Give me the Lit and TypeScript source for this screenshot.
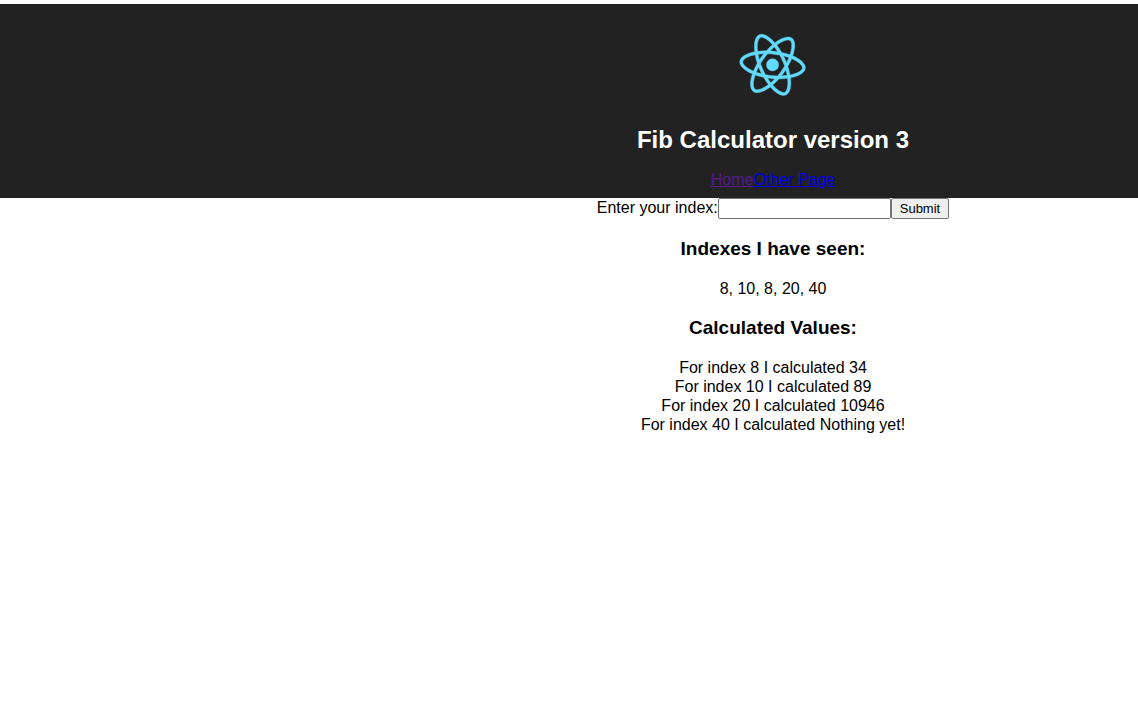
import { LitElement, html, css } from "lit";
import { customElement, state } from "lit/decorators.js";

@customElement("react-logo")
class ReactLogo extends LitElement {
  static styles = css`
    :host {
      display: block;
    }
    .logo {
      display: block;
      height: 80px;
      margin: 0 auto;
      transform: rotate(6deg);
    }
  `;

  render() {
    return html`
      <svg class="logo" viewBox="0 0 841.9 595.3" role="img" aria-label="logo">
        <g fill="#61dafb" stroke="#61dafb" stroke-width="3">
          <path
            d="M666.3 296.5c0-32.5-40.7-63.3-103.1-82.4 14.4-63.6 8-114.2-20.2-130.4-6.5-3.8-14.1-5.6-22.4-5.6v22.3c4.6 0 8.3.9 11.4 2.6 13.6 7.8 19.5 37.5 14.9 75.7-1.1 9.4-2.9 19.3-5.1 29.4-19.6-4.8-41-8.5-63.5-10.9-13.5-18.5-27.5-35.3-41.6-50 32.6-30.3 63.2-46.9 84-46.9V78c-27.5 0-63.5 19.6-99.9 53.6-36.4-33.8-72.4-53.2-99.9-53.2v22.3c20.7 0 51.4 16.5 84 46.6-14 14.7-28 31.4-41.3 49.9-22.6 2.4-44 6.1-63.6 11-2.3-10-4-19.7-5.2-29-4.7-38.2 1.1-67.9 14.6-75.8 3-1.8 6.9-2.6 11.5-2.6V78.5c-8.4 0-16 1.8-22.6 5.6-28.1 16.2-34.4 66.7-19.9 130.1-62.2 19.2-102.7 49.9-102.7 82.3 0 32.5 40.7 63.3 103.1 82.4-14.4 63.6-8 114.2 20.2 130.4 6.5 3.8 14.1 5.6 22.5 5.6 27.5 0 63.5-19.6 99.9-53.6 36.4 33.8 72.4 53.2 99.9 53.2 8.4 0 16-1.8 22.6-5.6 28.1-16.2 34.4-66.7 19.9-130.1 62-19.1 102.5-49.9 102.5-82.3zm-130.2-66.7c-3.7 12.9-8.3 26.2-13.5 39.5-4.1-8-8.4-16-13.1-24-4.6-8-9.5-15.8-14.4-23.4 14.2 2.1 27.9 4.7 41 7.9zm-45.8 106.5c-7.8 13.5-15.8 26.3-24.1 38.2-14.9 1.3-30 2-45.2 2-15.1 0-30.2-.7-45-1.9-8.3-11.9-16.4-24.6-24.2-38-7.6-13.1-14.5-26.4-20.8-39.8 6.2-13.4 13.2-26.8 20.7-39.9 7.8-13.5 15.8-26.3 24.1-38.2 14.9-1.3 30-2 45.2-2 15.1 0 30.2.7 45 1.9 8.3 11.9 16.4 24.6 24.2 38 7.6 13.1 14.5 26.4 20.8 39.8-6.3 13.4-13.2 26.8-20.7 39.9zm32.3-13c5.4 13.4 10 26.8 13.8 39.8-13.1 3.2-26.9 5.9-41.2 8 4.9-7.7 9.8-15.6 14.4-23.7 4.6-8 8.9-16.1 13-24.1zM421.2 430c-9.3-9.6-18.6-20.3-27.8-32 9 .4 18.2.7 27.5.7 9.4 0 18.7-.2 27.8-.7-9 11.7-18.3 22.4-27.5 32zm-74.4-58.9c-14.2-2.1-27.9-4.7-41-7.9 3.7-12.9 8.3-26.2 13.5-39.5 4.1 8 8.4 16 13.1 24 4.7 8 9.5 15.8 14.4 23.4zM420.7 163c9.3 9.6 18.6 20.3 27.8 32-9-.4-18.2-.7-27.5-.7-9.4 0-18.7.2-27.8.7 9-11.7 18.3-22.4 27.5-32zm-74 58.9c-4.9 7.7-9.8 15.6-14.4 23.7-4.6 8-8.9 16-13 24-5.4-13.4-10-26.8-13.8-39.8 13.1-3.1 26.9-5.8 41.2-7.9zm-90.5 125.2c-35.4-15.1-58.3-34.9-58.3-50.6 0-15.7 22.9-35.6 58.3-50.6 8.6-3.7 18-7 27.7-10.1 5.7 19.6 13.2 40 22.5 60.9-9.2 20.8-16.6 41.1-22.2 60.6-9.9-3.1-19.3-6.5-28-10.2zM310 490c-13.6-7.8-19.5-37.5-14.9-75.7 1.1-9.4 2.9-19.3 5.1-29.4 19.6 4.8 41 8.5 63.5 10.9 13.5 18.5 27.5 35.3 41.6 50-32.6 30.3-63.2 46.9-84 46.9-4.5-.1-8.3-1-11.3-2.7zm237.2-76.2c4.7 38.2-1.1 67.9-14.6 75.8-3 1.8-6.9 2.6-11.5 2.6-20.7 0-51.4-16.5-84-46.6 14-14.7 28-31.4 41.3-49.9 22.6-2.4 44-6.1 63.6-11 2.3 10.1 4.1 19.8 5.2 29.1zm38.5-66.7c-8.6 3.7-18 7-27.7 10.1-5.7-19.6-13.2-40-22.5-60.9 9.2-20.8 16.6-41.1 22.2-60.6 9.9 3.1 19.3 6.5 28.1 10.2 35.4 15.1 58.3 34.9 58.3 50.6-.1 15.7-23 35.6-58.4 50.6z"
          />
          <circle cx="420.9" cy="296.5" r="45.7" />
        </g>
      </svg>
    `;
  }
}

@customElement("fib-form")
class FibForm extends LitElement {
  @state() private seen = [8, 10, 8, 20, 40];
  @state() private values: Array<[number, string]> = [
    [8, "34"],
    [10, "89"],
    [20, "10946"],
    [40, "Nothing yet!"],
  ];
  @state() private index = "";

  static styles = css`
    :host {
      display: block;
    }
    .form {
      display: flex;
      justify-content: center;
      align-items: flex-start;
    }
    .field {
      box-sizing: border-box;
      width: 173px;
      height: 21px;
      padding: 1px 2px;
      border: 1px solid #767676;
      border-radius: 2px;
      background: #fff;
      font: 13px "Liberation Sans", Arial, sans-serif;
    }
    .submit {
      box-sizing: border-box;
      height: 21px;
      padding: 0 8px;
      border: 1px solid #767676;
      border-radius: 2px;
      background: #efefef;
      color: #000;
      font: 13px "Liberation Sans", Arial, sans-serif;
    }
    .title {
      margin: 19px 0;
      font-size: 19px;
      line-height: 22px;
      font-weight: bold;
    }
  `;

  private submit(event: Event) {
    event.preventDefault();
    const n = Number(this.index);
    if (this.index === "" || Number.isNaN(n)) return;
    this.seen = [...this.seen, n];
    if (!this.values.some(([key]) => key === n)) {
      this.values = [...this.values, [n, "Nothing yet!"]];
    }
    this.index = "";
  }

  render() {
    return html`
      <form class="form" @submit=${this.submit}>
        <label for="index">Enter your index:</label>
        <input
          id="index"
          class="field"
          type="text"
          .value=${this.index}
          @input=${(e: Event) => (this.index = (e.target as HTMLInputElement).value)}
        />
        <button class="submit" type="submit">Submit</button>
      </form>
      <h3 class="title">Indexes I have seen:</h3>
      <div>${this.seen.join(", ")}</div>
      <h3 class="title">Calculated Values:</h3>
      ${this.values.map(
        ([key, value]) => html`<div>For index ${key} I calculated ${value}</div>`
      )}
    `;
  }
}

@customElement("app-root")
class AppRoot extends LitElement {
  static styles = css`
    :host {
      display: block;
      padding-top: 4px;
      background: #fff;
      color: #000;
      font: 16px/19px "Liberation Sans", Arial, sans-serif;
      text-align: center;
    }
    .header {
      padding: 21px 0 9px 408px;
      background: #222;
      color: #fff;
    }
    .heading {
      margin: 20px 0 16px;
      font-size: 24px;
      line-height: 29px;
      font-weight: bold;
    }
    .nav {
      display: flex;
      justify-content: center;
    }
    .link {
      color: #0000ee;
      text-decoration: underline;
    }
    .current {
      color: #551a8b;
    }
    .main {
      padding-left: 408px;
    }
  `;

  render() {
    return html`
      <header class="header">
        <react-logo></react-logo>
        <h1 class="heading">Fib Calculator version 3</h1>
        <nav class="nav">
          <a class="link current" href="#home">Home</a>
          <a class="link" href="#otherpage">Other Page</a>
        </nav>
      </header>
      <main class="main">
        <fib-form></fib-form>
      </main>
    `;
  }
}
